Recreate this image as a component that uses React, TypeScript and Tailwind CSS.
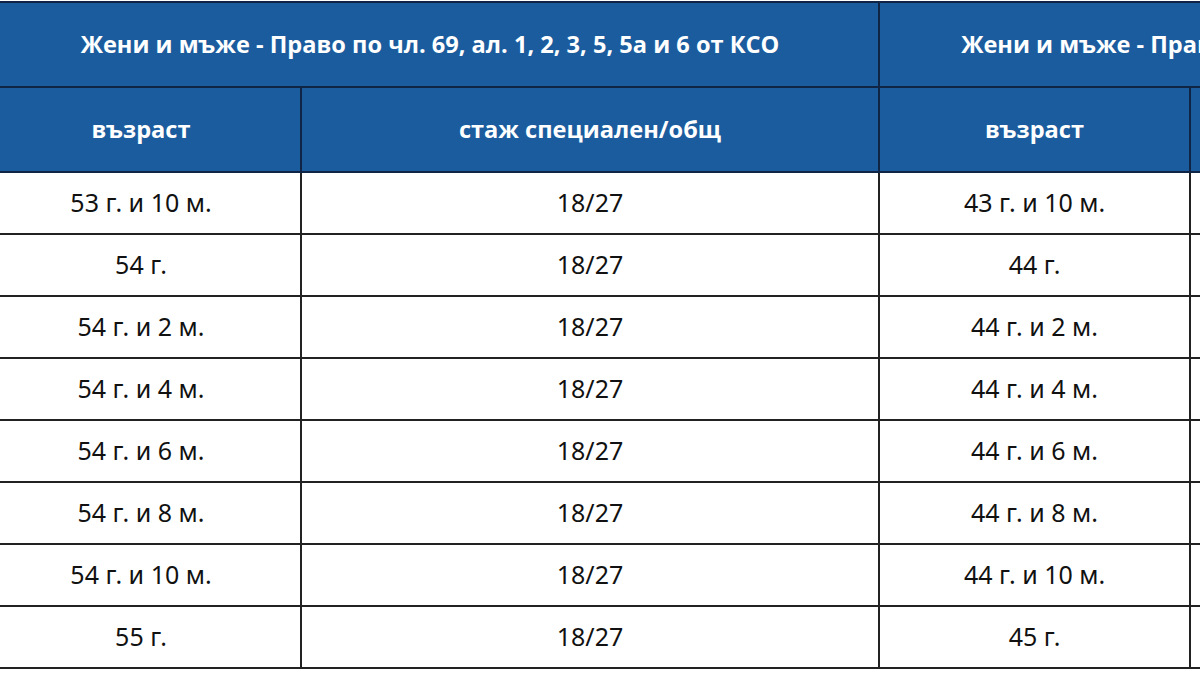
const rows: [string, string, string][] = [
  ['53 г. и 10 м.', '18/27', '43 г. и 10 м.'],
  ['54 г.', '18/27', '44 г.'],
  ['54 г. и 2 м.', '18/27', '44 г. и 2 м.'],
  ['54 г. и 4 м.', '18/27', '44 г. и 4 м.'],
  ['54 г. и 6 м.', '18/27', '44 г. и 6 м.'],
  ['54 г. и 8 м.', '18/27', '44 г. и 8 м.'],
  ['54 г. и 10 м.', '18/27', '44 г. и 10 м.'],
  ['55 г.', '18/27', '45 г.'],
]

const head = 'bg-[#1b5c9e] text-white font-bold text-[23.6px] border-2 border-[#102445] text-center align-middle whitespace-nowrap'
const cell = 'border-2 border-[#222] text-center align-middle text-[25px] text-[#111] h-[62px]'

export default function App() {
  return (
    <div lang="bg" className="w-[1200px] h-[675px] overflow-hidden bg-white pt-[1px]">
      <table
        className="table-fixed border-collapse ml-[-20px] w-[1761px]"
        style={{ fontFamily: '"Open Sans", "Noto Sans", sans-serif' }}
      >
        <colgroup>
          <col className="w-[320px]" />
          <col className="w-[578px]" />
          <col className="w-[311px]" />
          <col className="w-[552px]" />
        </colgroup>
        <thead>
          <tr className="h-[85px]">
            <th colSpan={2} className={head}>
              Жени и мъже - Право по чл. 69, ал. 1, 2, 3, 5, 5а и 6 от КСО
            </th>
            <th colSpan={2} className={head}>
              Жени и мъже - Право по чл. 69, ал. 1, 2, 3, 5, 5а и 6 от КСО
            </th>
          </tr>
          <tr className="h-[85px]">
            <th className={head}>възраст</th>
            <th className={head}>стаж специален/общ</th>
            <th className={head}>възраст</th>
            <th className={head}>стаж специален/общ</th>
          </tr>
        </thead>
        <tbody style={{ fontFamily: '"Noto Sans", sans-serif' }}>
          {rows.map((r, i) => (
            <tr key={i}>
              <td className={cell}>{r[0]}</td>
              <td className={cell}>{r[1]}</td>
              <td className={cell}>{r[2]}</td>
              <td className={cell}>{r[1]}</td>
            </tr>
          ))}
        </tbody>
      </table>
    </div>
  )
}
